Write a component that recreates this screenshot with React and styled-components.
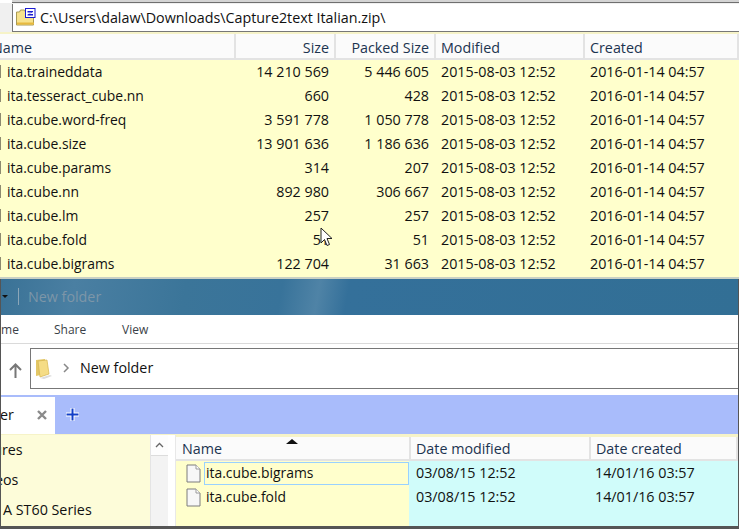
import React from "react";
import styled, { createGlobalStyle } from "styled-components";

const archiveFiles = [
  ["ita.traineddata", "14 210 569", "5 446 605"],
  ["ita.tesseract_cube.nn", "660", "428"],
  ["ita.cube.word-freq", "3 591 778", "1 050 778"],
  ["ita.cube.size", "13 901 636", "1 186 636"],
  ["ita.cube.params", "314", "207"],
  ["ita.cube.nn", "892 980", "306 667"],
  ["ita.cube.lm", "257", "257"],
  ["ita.cube.fold", "51", "51"],
  ["ita.cube.bigrams", "122 704", "31 663"],
];

const GlobalStyle = createGlobalStyle`
  html, body {
    margin: 0;
    background: #fff;
  }
  body {
    width: 739px;
    height: 529px;
    overflow: hidden;
    font-family: "Open Sans", "Noto Sans", "Liberation Sans", sans-serif;
    font-size: 14.3px;
    color: #111;
  }
`;

const Page = styled.div`
  width: 739px;
  height: 529px;
  position: relative;
  overflow: hidden;
  display: flex;
  flex-direction: column;
`;

const TopEdge = styled.div`
  height: 3px;
  background: #d4d4d4;
  border-bottom: 1px solid #6f6f6f;
  box-sizing: border-box;
  margin-left: 12px;
`;

const ArchiveBar = styled.div`
  height: 29px;
  display: flex;
  align-items: center;
  background: #f0f0f0;
  box-sizing: border-box;
`;

const PathField = styled.div`
  flex: 1;
  height: 28px;
  margin-left: 12px;
  display: flex;
  align-items: center;
  gap: 4px;
  padding-left: 3px;
  background: #fff;
  border-left: 1px solid #777;
  border-bottom: 1px solid #777;
  box-sizing: border-box;
`;

const HeaderRow = styled.div`
  display: grid;
  grid-template-columns: ${(p) => p.$cols};
  height: ${(p) => p.$height}px;
  background: #fbfbfb;
  border-top: 2px solid #f6f3c8;
  box-sizing: border-box;
  flex: none;
`;

const HeaderCell = styled.div`
  display: flex;
  align-items: center;
  justify-content: ${(p) => (p.$right ? "flex-end" : "flex-start")};
  padding: ${(p) => (p.$tight ? 0 : 2)}px 5px 0 ${(p) => p.$inset || 5}px;
  border-right: 2px solid #e3e3e3;
  border-bottom: 2px solid #e3e3e3;
  color: #1c3450;
  position: relative;
  overflow: hidden;
  white-space: nowrap;
`;

const ClippedTitle = styled.span`
  margin-left: -13px;
`;

const RowList = styled.div`
  height: 219px;
  box-sizing: border-box;
  background: #ffffcc;
  border-bottom: 2px solid #c9d0c4;
`;

const ArchiveRow = styled.div`
  display: grid;
  grid-template-columns: 236px 100px 100px 149px 1fr;
  height: 24px;
  padding-bottom: 1px;
  box-sizing: border-box;
  align-items: center;
  white-space: nowrap;
`;

const NameCell = styled.div`
  padding-left: 7px;
  font-size: 13.9px;
  position: relative;

  &::before {
    content: "";
    position: absolute;
    left: 0;
    top: 3px;
    width: 1px;
    height: 13px;
    background: #8d8a70;
  }
`;

const Cell = styled.div`
  padding: 0 7px 0 5px;
  text-align: ${(p) => (p.$right ? "right" : "left")};
`;

const Explorer = styled.div`
  flex: 1;
  min-height: 0;
  display: flex;
  flex-direction: column;
  border-left: 1px solid #555;
  border-right: 1px solid #555;
  border-bottom: 3px solid #555;
`;

const TitleBand = styled.div`
  height: 36px;
  flex: none;
  display: flex;
  align-items: center;
  padding: 0 0 2px 1px;
  box-sizing: border-box;
  color: #7d96a8;
  background: linear-gradient(100deg, #3a7296 0, #4a7fa2 10%, #3b7599 25%, #38739a 38%, #4f83a6 43%, #34709a 47%, #326f95 100%);
`;

const CaretMark = styled.span`
  width: 0;
  height: 0;
  border-left: 3px solid transparent;
  border-right: 3px solid transparent;
  border-top: 3px solid #111;
  margin-right: 10px;
`;

const TitleDivider = styled.span`
  width: 1px;
  height: 17px;
  background: #8ba6b8;
  margin-right: 9px;
`;

const RibbonTabs = styled.div`
  height: 29px;
  flex: none;
  display: flex;
  align-items: center;
  box-sizing: border-box;
  border-bottom: 1px solid #dadada;
  font-size: 12px;
  color: #3a3f48;
  background: #fff;
`;

const RibbonTab = styled.span`
  width: ${(p) => p.$width}px;
  flex: none;
`;

const RibbonClipped = styled.span`
  width: 53px;
  flex: none;
  text-indent: -16px;
  overflow: hidden;
`;

const AddressRow = styled.div`
  height: 49px;
  flex: none;
  display: flex;
  align-items: center;
  background: #fff;
  box-sizing: border-box;
`;

const UpButton = styled.div`
  width: 29px;
  display: flex;
  justify-content: center;
  flex: none;
  padding-top: 3px;
  box-sizing: border-box;
`;

const AddressField = styled.div`
  flex: 1;
  height: 41px;
  display: flex;
  align-items: center;
  padding: 0 0 2px 4px;
  gap: 10px;
  border: 1px solid #777;
  border-right: none;
  box-sizing: border-box;
`;

const TabStrip = styled.div`
  height: 39px;
  flex: none;
  margin-top: 2px;
  display: flex;
  background: #a9bcfb;
  box-sizing: border-box;
  padding-top: 2px;
`;

const ActiveTab = styled.div`
  width: 54px;
  background: #fff;
  display: flex;
  align-items: center;
  justify-content: space-between;
  padding: 0 8px 2px 0;
  box-sizing: border-box;
  overflow: hidden;
`;

const TabTitle = styled.span`
  margin-left: -1px;
`;

const AddTab = styled.div`
  width: 34px;
  display: flex;
  align-items: center;
  justify-content: center;
  padding-bottom: 2px;
`;

const Body = styled.div`
  flex: 1;
  min-height: 0;
  display: flex;
  border-top: 1px solid #f6f3c8;
`;

const NavPane = styled.div`
  width: 149px;
  flex: none;
  background: #fdfcd9;
  box-sizing: border-box;
  overflow: hidden;
`;

const NavItem = styled.div`
  height: 30px;
  padding-bottom: 2px;
  box-sizing: border-box;
  display: flex;
  align-items: center;
  white-space: nowrap;
  margin-left: ${(p) => p.$shift}px;
`;

const ScrollTrack = styled.div`
  width: 18px;
  flex: none;
  background: #f3f3f3;
  border-left: 1px solid #e4e4e4;
  box-sizing: border-box;
`;

const ScrollButton = styled.div`
  height: 20px;
  display: flex;
  align-items: center;
  justify-content: center;
  background: #fdfdfd;
  border-bottom: 1px solid #dcdcdc;
`;

const FilePane = styled.div`
  flex: 1;
  min-width: 0;
  display: flex;
  flex-direction: column;
  margin-left: 7px;
  border-left: 1px solid #e8e8e8;
`;

const FileRows = styled.div`
  flex: 1;
  display: grid;
  grid-template-columns: 233px 180px 1fr;
  min-height: 0;
`;

const NameColumn = styled.div`
  background: #ffffcc;
`;

const DateColumn = styled.div`
  background: #d0fcfa;
`;

const NameRow = styled.div`
  height: 24px;
  display: flex;
  align-items: center;
  padding-left: 10px;
  gap: 3px;
`;

const NameBox = styled.div`
  flex: 1;
  height: 23px;
  display: flex;
  align-items: center;
  padding: 0 0 2px 1px;
  font-size: 13.9px;
  box-sizing: border-box;
  border: 1px solid ${(p) => (p.$focused ? "#99d1ff" : "transparent")};
`;

const DateRow = styled.div`
  height: 24px;
  display: flex;
  align-items: center;
  padding: 0 0 2px ${(p) => p.$inset}px;
  box-sizing: border-box;
`;

const SortArrow = styled.span`
  position: absolute;
  left: 110px;
  top: 2px;
  width: 0;
  height: 0;
  border-left: 6px solid transparent;
  border-right: 6px solid transparent;
  border-bottom: 5px solid #111;
`;

const Pointer = styled.svg`
  position: absolute;
  left: 320px;
  top: 227px;
`;

const ZipIcon = () => (
  <svg width="20" height="18" viewBox="0 0 20 18">
    <path d="M0.500 4h3l1-2h4l1 2h8v13H0.500z" fill="#f7e28c" stroke="#a99a55" />
    <rect x="1" y="14.500" width="17" height="2" fill="#e7b93f" />
    <rect x="9.500" y="0.500" width="9.500" height="9" fill="#fff" stroke="#1a1ad0" />
    <path d="M11.500 3h5.500v1l-4 2h4V7.500h-5.500v-1l4-2h-4z" fill="#1a1ad0" />
  </svg>
);

const FolderIcon = () => (
  <svg width="18" height="22" viewBox="0 0 18 22">
    <path d="M1 3l9-1v15l-9 2z" fill="#e3c766" />
    <path d="M3 4l9-1 2 14-9 3z" fill="#f5dc85" stroke="#d6b54e" strokeWidth="0.7" />
    <path d="M5 21l10-3 2 1-8 3z" fill="#dcdcdc" />
  </svg>
);

const PageIcon = () => (
  <svg width="15" height="19" viewBox="0 0 15 19">
    <path d="M1 1h9l4 4v13H1z" fill="#f7f7f7" stroke="#7d7d7d" />
    <path d="M10 1v4h4" fill="#fff" stroke="#9a9a9a" />
  </svg>
);

const App = () => {
  return (
    <Page>
      <GlobalStyle />
      <TopEdge />
      <ArchiveBar>
        <PathField>
          <ZipIcon />
          C:\Users\dalaw\Downloads\Capture2text Italian.zip\
        </PathField>
      </ArchiveBar>
      <HeaderRow $cols="236px 100px 100px 149px 1fr" $height={28}>
        <HeaderCell>
          <ClippedTitle>Name</ClippedTitle>
        </HeaderCell>
        <HeaderCell $right>Size</HeaderCell>
        <HeaderCell $right>Packed Size</HeaderCell>
        <HeaderCell>Modified</HeaderCell>
        <HeaderCell>Created</HeaderCell>
      </HeaderRow>
      <RowList>
        {archiveFiles.map(([name, size, packed]) => (
          <ArchiveRow key={name}>
            <NameCell>{name}</NameCell>
            <Cell $right>{size}</Cell>
            <Cell $right>{packed}</Cell>
            <Cell>2015-08-03 12:52</Cell>
            <Cell>2016-01-14 04:57</Cell>
          </ArchiveRow>
        ))}
      </RowList>

      <Explorer>
        <TitleBand>
          <CaretMark />
          <TitleDivider />
          New folder
        </TitleBand>
        <RibbonTabs>
          <RibbonClipped>Home</RibbonClipped>
          <RibbonTab $width={68}>Share</RibbonTab>
          <RibbonTab $width={40}>View</RibbonTab>
        </RibbonTabs>
        <AddressRow>
          <UpButton>
            <svg width="13" height="15" viewBox="0 0 13 15">
              <path d="M6.500 15V2M1 7l5.500-5.500L12 7" fill="none" stroke="#777" strokeWidth="2" />
            </svg>
          </UpButton>
          <AddressField>
            <FolderIcon />
            <svg width="7" height="10" viewBox="0 0 7 10">
              <path d="M1 1l4 4-4 4" fill="none" stroke="#888" strokeWidth="1.500" />
            </svg>
            New folder
          </AddressField>
        </AddressRow>
        <TabStrip>
          <ActiveTab>
            <TabTitle>er</TabTitle>
            <svg width="10" height="10" viewBox="0 0 10 10">
              <path d="M1 1l8 8M9 1l-8 8" stroke="#8a8a8a" strokeWidth="2.400" />
            </svg>
          </ActiveTab>
          <AddTab>
            <svg width="15" height="15" viewBox="0 0 15 15">
              <path d="M7.500 1v13M1 7.500h13" stroke="#fff" strokeWidth="4" />
              <path d="M7.500 1.500v12M1.500 7.500h12" stroke="#1240c8" strokeWidth="2" />
            </svg>
          </AddTab>
        </TabStrip>
        <Body>
          <NavPane>
            <NavItem $shift={-32}>Pictures</NavItem>
            <NavItem $shift={-27}>Videos</NavItem>
            <NavItem $shift={2}>A ST60 Series</NavItem>
          </NavPane>
          <ScrollTrack>
            <ScrollButton>
              <svg width="9" height="6" viewBox="0 0 9 6">
                <path d="M1 5l3.500-3.500L8 5" fill="none" stroke="#666" strokeWidth="1.300" />
              </svg>
            </ScrollButton>
          </ScrollTrack>
          <FilePane>
            <HeaderRow $cols="235px 180px 1fr" $height={26}>
              <HeaderCell $tight $inset={6}>
                Name
                <SortArrow />
              </HeaderCell>
              <HeaderCell $tight>Date modified</HeaderCell>
              <HeaderCell $tight>Date created</HeaderCell>
            </HeaderRow>
            <FileRows>
              <NameColumn>
                <NameRow>
                  <PageIcon />
                  <NameBox $focused>ita.cube.bigrams</NameBox>
                </NameRow>
                <NameRow>
                  <PageIcon />
                  <NameBox>ita.cube.fold</NameBox>
                </NameRow>
              </NameColumn>
              <DateColumn>
                <DateRow $inset={7}>03/08/15 12:52</DateRow>
                <DateRow $inset={7}>03/08/15 12:52</DateRow>
              </DateColumn>
              <DateColumn>
                <DateRow $inset={6}>14/01/16 03:57</DateRow>
                <DateRow $inset={6}>14/01/16 03:57</DateRow>
              </DateColumn>
            </FileRows>
          </FilePane>
        </Body>
      </Explorer>

      <Pointer width="13" height="20" viewBox="0 0 13 20">
        <path d="M1 1v15l3.500-3.500 2.500 6 2.500-1-2.500-6H12z" fill="#fff" stroke="#222" strokeWidth="1" />
      </Pointer>
    </Page>
  );
};

export default App;
